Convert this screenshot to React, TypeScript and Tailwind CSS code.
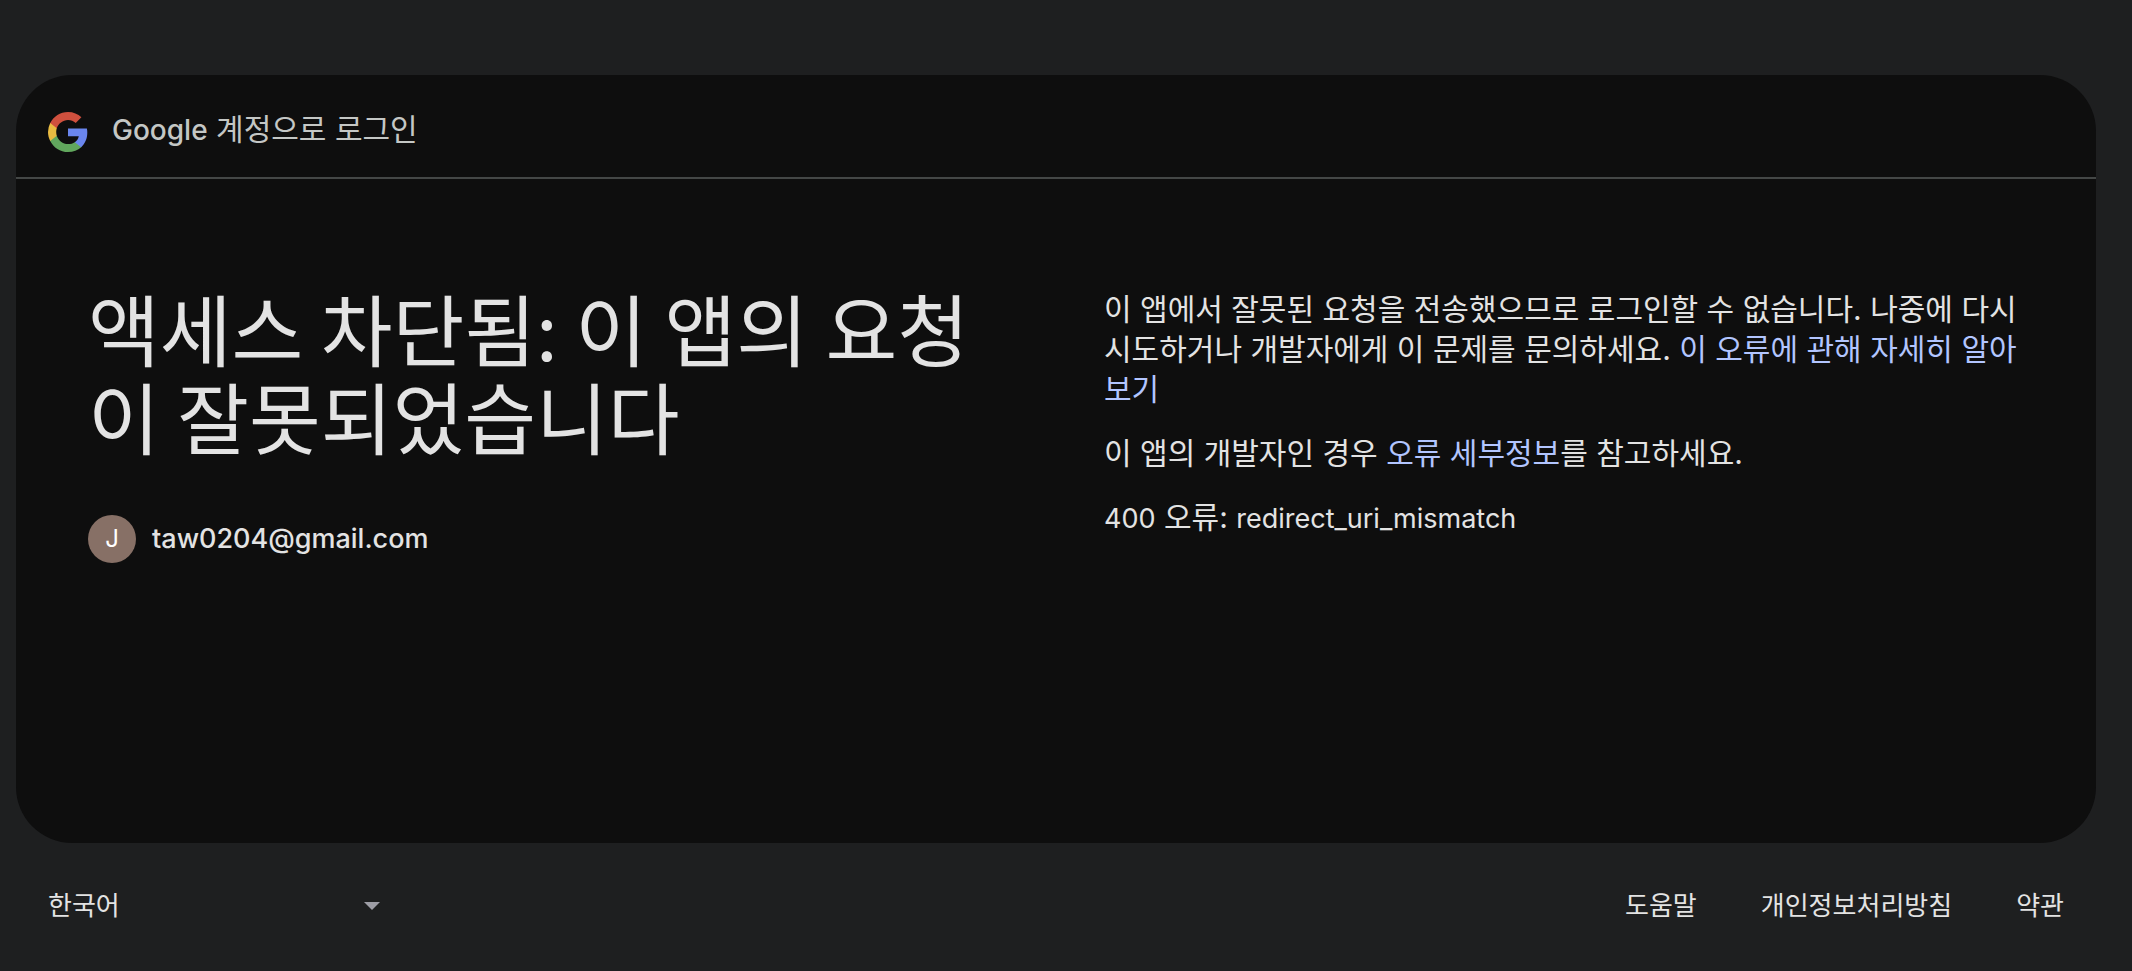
import React from "react";

function GoogleLogo() {
  return (
    <svg viewBox="0 0 40 40" className="size-10 shrink-0" aria-hidden="true">
      <path fill="#6a86ee" d="M39.3 20.5c0-1.4-.1-2.8-.4-4.1H20v7.8h10.8c-.5 2.500-1.900 4.600-4 6v5h6.400c3.800-3.500 6.100-8.600 6.100-14.700z" />
      <path fill="#61a75d" d="M20 40c5.400 0 9.900-1.800 13.200-4.800l-6.400-5c-1.800 1.200-4.100 1.900-6.800 1.900-5.200 0-9.600-3.500-11.200-8.300H2.200v5.100C5.500 35.500 12.200 40 20 40z" />
      <path fill="#e9bb41" d="M8.800 23.800c-.4-1.200-.6-2.500-.6-3.800s.2-2.600.6-3.800v-5.100H2.200A20 20 0 0 0 0 20c0 3.200.8 6.300 2.200 8.900z" />
      <path fill="#cf503e" d="M20 7.900c2.900 0 5.600 1 7.700 3l5.700-5.700C29.900 2 25.400 0 20 0 12.200 0 5.500 4.500 2.200 11.100l6.600 5.100C10.400 11.500 14.800 7.900 20 7.900z" />
    </svg>
  );
}

function FooterLink({ children }: { children: React.ReactNode }) {
  return (
    <a href="#" className="px-8 py-4">
      {children}
    </a>
  );
}

export default function App() {
  return (
    <div className="flex min-h-screen flex-col bg-[#1e1f20] pt-[75px] pr-9 pl-4 font-['Inter','Noto_Sans_CJK_KR',sans-serif] text-[#e3e3e3]">
      <main className="flex min-h-[768px] flex-col rounded-[56px] bg-[#0e0e0e]">
        <header className="flex h-[104px] items-end gap-6 border-b-2 border-[#444746] px-8 pb-[25px] text-[#c4c7c5]">
          <GoogleLogo />
          <p className="pb-1 text-[30px] leading-9">
            <span className="text-[28px] font-medium">Google</span> 계정으로 로그인
          </p>
        </header>

        <div className="grid grid-cols-2 gap-24 px-[72px] pt-[104px] pb-16">
          <section>
            <h1 className="font-['Noto_Sans_CJK_KR',sans-serif] text-[78px] leading-[88px] break-all">
              액세스 차단됨: 이 앱의 요청이 잘못되었습니다
            </h1>
            <div className="mt-14 flex items-center gap-4">
              <span className="flex size-12 items-center justify-center rounded-full bg-[#877066] text-2xl text-white">J</span>
              <span className="text-[27px] font-medium">taw0204@gmail.com</span>
            </div>
          </section>

          <section className="flex flex-col gap-6 pt-1.5 text-[30px] leading-10">
            <p className="break-all">
              이 앱에서 잘못된 요청을 전송했으므로 로그인할 수 없습니다. 나중에 다시 시도하거나 개발자에게 이 문제를 문의하세요.{" "}
              <a href="#" className="text-[#b2c5ff]">이 오류에 관해 자세히 알아보기</a>
            </p>
            <p>
              이 앱의 개발자인 경우 <a href="#" className="text-[#b2c5ff]">오류 세부정보</a>를 참고하세요.
            </p>
            <p>
              <span className="text-[27px]">400</span> 오류: <span className="text-[27px]">redirect_uri_mismatch</span>
            </p>
          </section>
        </div>
      </main>

      <footer className="flex items-center justify-between pt-8 text-[26px] leading-[30px]">
        <div className="relative flex items-center">
          <select aria-label="언어 선택" defaultValue="ko" className="w-[380px] appearance-none bg-transparent py-4 pl-8 outline-none">
            <option value="ko">한국어</option>
            <option value="en">English</option>
          </select>
          <svg viewBox="0 0 16 8" className="pointer-events-none absolute right-4 h-2 w-4 fill-[#9e9ea6]" aria-hidden="true">
            <path d="M0 0h16L8 8z" />
          </svg>
        </div>
        <nav className="flex">
          <FooterLink>도움말</FooterLink>
          <FooterLink>개인정보처리방침</FooterLink>
          <FooterLink>약관</FooterLink>
        </nav>
      </footer>
    </div>
  );
}
